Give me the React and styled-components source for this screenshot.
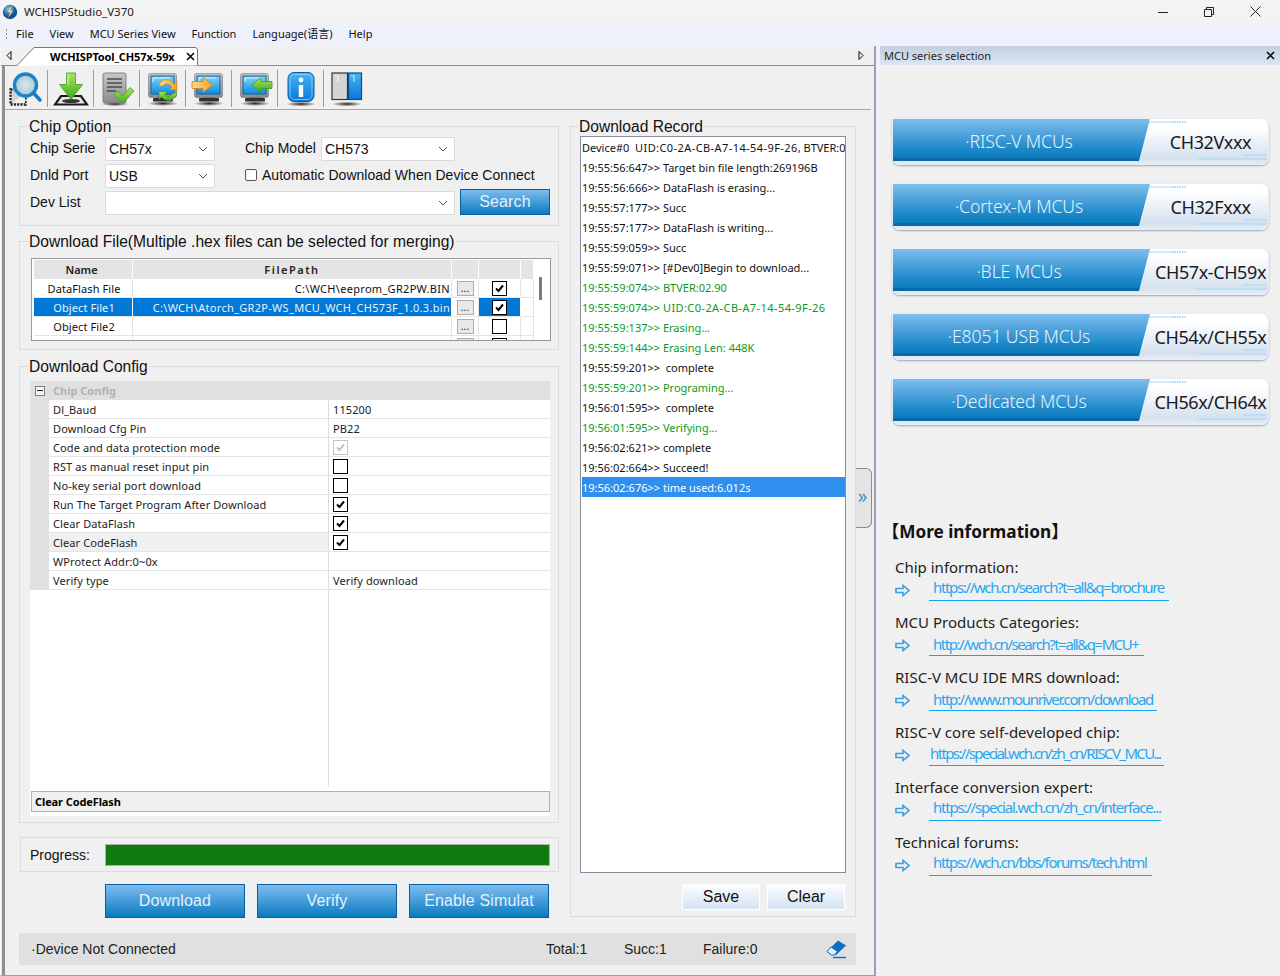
import React from "react";
import styled, { createGlobalStyle } from "styled-components";

const Global = createGlobalStyle`
  html, body { margin: 0; padding: 0; background: #f0f0f0; }
  * { box-sizing: border-box; }
  #root { width: 1280px; height: 976px; overflow: hidden; }
`;

const UI = `"Noto Sans", "Noto Sans CJK SC", sans-serif`;
const ARIAL = `"Liberation Sans", Arial, sans-serif`;

const Shell = styled.div`
  width: 1280px; height: 976px; display: flex; flex-direction: column;
  background: #f0f0f0; font-family: ${UI}; color: #000; overflow: hidden;
`;
const TitleBar = styled.div`
  height: 23px; display: flex; align-items: center; background: #f3f3f3; padding-left: 2px;
  font-size: 12px; color: #222; flex: none;
`;
const TitleText = styled.span`margin-left: 6px; flex: 1; font-size: 11.5px;`;
const WinButtons = styled.div`display: flex; width: 138px; height: 23px; margin-right: 2px;`;
const WinButton = styled.div`width: 46px; display: flex; align-items: center; justify-content: center;`;

const MenuBar = styled.div`
  height: 23px; flex: none; display: flex; align-items: center; gap: 16px; background: #eef0fb;
  font-size: 11px; line-height: 13px; padding: 0 0 2px 5px; color: #111;
`;
const Grip = styled.div`
  width: 3px; height: 11px; margin-right: -8px;
  background: radial-gradient(circle, #8a8a8a 1px, transparent 1.1px) 0 0 / 3px 4px;
`;
const Main = styled.div`flex: 1; display: flex; min-height: 0; background: #f0f2fb;`;

const LeftPane = styled.div`
  width: 876px; flex: none; position: relative; display: flex; flex-direction: column;
  background: #f0f0f0; border-right: 2px solid #a0a0a0; border-left: 1px solid #f8f8f8;
  border-bottom: 1px solid #a0a0a0;
`;
const TabStrip = styled.div`
  height: 20px; flex: none; display: flex; align-items: flex-end; background: #f0f0f0;
  border-bottom: 1px solid #8c8c8c; padding-left: 1px;
`;
const TabArrow = styled.div`width: 14px; height: 19px; display: flex; align-items: center; justify-content: center;`;
const Tab = styled.div`
  position: relative; width: 184px; height: 20px; margin-bottom: -1px; display: flex; align-items: center;
  padding-left: 34px; font-size: 11px; font-weight: 700; letter-spacing: -0.13px;
`;
const TabShape = styled.svg`position: absolute; inset: 0;`;
const TabLabel = styled.span`position: relative; flex: 1;`;
const TabClose = styled.svg`position: relative; margin-right: 5px;`;
const StripFill = styled.div`flex: 1;`;
const StripRight = styled.div`width: 16px; height: 19px; display: flex; align-items: center; margin-right: 0;`;

const Frame = styled.div`
  flex: 1; display: flex; flex-direction: column; min-height: 0;
  border-left: 3px solid #8f8f8f; margin-left: 1px;
`;
const Toolbar = styled.div`
  height: 44px; flex: none; display: flex; align-items: center; padding: 2px 0 0 0;
  border-bottom: 1px solid #a8a8a8; margin-right: 3px;
`;
const ToolCell = styled.div`
  width: ${p => (p.$first ? 43 : 46)}px; height: 37px; display: flex; align-items: center; justify-content: center;
  border-right: ${p => (p.$last ? "none" : "1px solid #9a9a9a")};
`;

const Body = styled.div`
  display: grid; grid-template-columns: 540px 286px; column-gap: 11px; padding: 7px 0 0 14px;
`;
const Column = styled.div`display: flex; flex-direction: column;`;

const Group = styled.fieldset`
  margin: ${p => p.$mt || 0}px 0 0; padding: ${p => p.$pt || 0}px 9px 0 ${p => p.$pl || 10}px; min-width: 0;
  border: 1px solid #dcdcdc; height: ${p => p.$h}px;
`;
const Legend = styled.legend`
  margin-left: -2px; padding: 0 1px; font: 15.6px/20px ${ARIAL}; color: #111; height: 18px;
`;
const OptRow = styled.div`
  display: flex; align-items: center; height: 24px; margin-bottom: 3px; font: 14px ${ARIAL}; color: #111;
`;
const OptLabel = styled.span`width: ${p => p.$w}px; flex: none; margin-left: ${p => p.$ml || 0}px; padding-bottom: 2px;`;
const Combo = styled.div`
  width: ${p => p.$w}px; height: 24px; background: #fff; border: 1px solid #dadada; flex: none; border-radius: 1px;
  display: flex; align-items: center; padding: 0 6px 0 3px; font: 14px ${ARIAL}; color: #111;
`;
const ComboText = styled.span`flex: 1;`;
const CheckLabel = styled.label`
  display: flex; align-items: center; margin-left: 30px; font: 14px ${ARIAL}; color: #111; letter-spacing: 0.03px; padding-bottom: 2px;
`;
const PlainBox = styled.span`
  width: 12px; height: 12px; border: 1px solid #555; border-radius: 2px; background: #fff; margin-right: 5px;
`;
const BlueButton = styled.button`
  width: ${p => p.$w}px; height: ${p => p.$h}px; margin: ${p => p.$m || 0}; padding: 0; flex: none;
  border: 1px solid #0a5f9e; font: 16px ${ARIAL}; letter-spacing: 0.15px; color: #e6f1fa; white-space: nowrap; overflow: hidden;
  background: linear-gradient(#7dbcee, #0a7bc2);
`;

const FileList = styled.div`
  height: 83px; width: 520px; margin-left: 1px; border: 1px solid #9a9a9a; background: #fff; overflow: hidden;
  padding: 1px 0 0 2px; position: relative; font-size: 11px; letter-spacing: 0.1px;
`;
const FileGrid = styled.div`display: grid; grid-template-columns: 99px 319px 27px 42px 13px; width: 500px;`;
const FileHead = styled.div`
  height: 19px; background: #e4e4e4; border-right: 1px solid #fff; display: flex; align-items: center;
  justify-content: center; font-weight: 600; letter-spacing: ${p => p.$sp || 0}px; color: #222;
  padding-right: ${p => p.$pr || 0}px;
`;
const FileCell = styled.div`
  height: 19px; border-right: 1px solid ${p => (p.$sel ? "#fff" : "#e4e4e4")}; border-bottom: 1px solid #e4e4e4;
  display: flex; align-items: center; justify-content: ${p => p.$align || "center"}; overflow: hidden; white-space: nowrap;
  background: ${p => (p.$sel ? "#0078d7" : "#fff")}; color: ${p => (p.$sel ? "#e8f3fc" : "#111")};
  padding: 0 ${p => (p.$align ? 1 : 0)}px 0 ${p => (p.$nudge ? 2 : 0)}px;
  letter-spacing: ${p => (p.$align ? 0.3 : 0.1)}px;
`;
const Dots = styled.span`
  width: 17px; height: 15px; border: 1px solid #adadad; background: #e9e9e9; color: #222; font-size: 10px;
  display: flex; align-items: center; justify-content: center; line-height: 1; padding-bottom: 0;
`;
const Tick = styled.span`
  width: 15px; height: 15px; border: 1px solid ${p => (p.$disabled ? "#c4c4c4" : "#000")}; background: #fff;
  display: flex; align-items: center; justify-content: center; flex: none;
`;
const ScrollThumb = styled.div`
  position: absolute; right: 8px; top: 18px; width: 3px; height: 23px; background: #7a7a7a;
`;

const PropGrid = styled.div`
  width: 520px; height: 406px; background: #fff; display: flex; flex-direction: column; font-size: 11px;
  letter-spacing: 0.1px; color: #222;
`;
const PropHead = styled.div`
  height: 19px; background: #e0e0e0; display: flex; align-items: center; padding-left: 5px; flex: none;
`;
const PropHeadText = styled.span`font-weight: 700; color: #b2b2b2; margin-left: 8px; letter-spacing: 0;`;
const Minus = styled.span`
  width: 10px; height: 10px; border: 1px solid #808080; background: #f4f4f4; display: flex; align-items: center; justify-content: center;
  &::before { content: ""; width: 6px; height: 1px; background: #222; }
`;
const PropRow = styled.div`
  height: 19px; flex: none; display: grid; grid-template-columns: 19px 280px 1fr; 
`;
const Gutter = styled.div`background: #e0e0e0;`;
const PropName = styled.div`
  display: flex; align-items: center; padding-left: 4px; border-right: 1px solid #dcdcdc; border-bottom: 1px solid #e4e4e4;
  background: ${p => (p.$active ? "#f0f0f0" : "#fff")};
`;
const PropValue = styled.div`
  display: flex; align-items: center; padding-left: 4px; border-bottom: 1px solid #e4e4e4;
`;
const PropFill = styled.div`
  flex: 1; margin-left: 19px; width: 280px; border-right: 1px solid #dcdcdc;
`;
const HelpWrap = styled.div`width: 520px; background: #fff; padding: 4px 0 4px 1px; height: 29px;`;
const HelpBox = styled.div`
  height: 21px; width: 519px; border: 1px solid #b0b0b0; background: #f0f0f0; display: flex; align-items: center;
  padding-left: 3px; font-size: 11px; font-weight: 700; letter-spacing: -0.1px;
`;
const ProgressRow = styled.div`
  margin: 14px 0 0 1px; height: 35px; border: 1px solid #dcdcdc; display: flex; align-items: center; padding: 0 8px 0 9px;
  font: 14px ${ARIAL}; color: #111;
`;
const ProgressLabel = styled.span`width: 75px;`;
const ProgressBar = styled.div`flex: 1; height: 22px; border: 1px solid #b0b0b0; background: #107c10;`;
const ActionRow = styled.div`display: flex; gap: 12px; margin-top: 12px; padding-left: 86px;`;

const RecordBox = styled.div`
  width: 266px; height: 737px; border: 1px solid #8c8c9c; background: #fff; padding-left: 1px; overflow: hidden;
  font-size: 11px;
`;
const RecordLine = styled.div`
  height: 20px; display: flex; align-items: center; white-space: pre; overflow: hidden; width: 263px;
  color: ${p => (p.$tone === "green" ? "#0a9a1a" : p.$tone === "sel" ? "#fff" : "#111")};
  background: ${p => (p.$tone === "sel" ? "#2f8fee" : "transparent")};
`;
const Uid = styled.span`letter-spacing: 0.42px;`;
const SaveRow = styled.div`display: flex; justify-content: flex-end; gap: 7px; margin-top: 11px; padding-right: 1px;`;
const SoftButton = styled.button`
  width: 78px; height: 26px; padding: 0; border: 1px solid #fff; font: 16px ${ARIAL}; color: #111;
  background: linear-gradient(#fbfcfe, #d4e3f2);
`;

const StatusBar = styled.div`
  margin: 15px 0 0 14px; width: 837px; height: 32px; background: #e0e0e0; display: flex; align-items: center;
  font: 14px ${ARIAL}; color: #222; padding-left: 12px;
`;
const StatusMain = styled.span`flex: 1;`;
const StatusItem = styled.span`width: ${p => p.$w}px;`;
const Eraser = styled.svg`margin-right: 9px; flex: none;`;

const Handle = styled.div`
  position: absolute; left: 855px; top: 422px; width: 16px; height: 60px; background: #e4e4e4;
  border: 1px solid #8c8c8c; border-left: none; border-radius: 0 6px 6px 0; display: flex; align-items: center;
  justify-content: center; color: #3d8fd6; font-size: 19px; line-height: 1; padding: 0 2px 4px 0;
`;

const RightPane = styled.div`flex: 1; margin-left: 4px; display: flex; flex-direction: column; background: #f0f0f0; min-width: 0;`;
const PaneHead = styled.div`
  height: 19px; flex: none; display: flex; align-items: center; justify-content: space-between; padding: 0 5px 0 4px;
  background: linear-gradient(#c2cfe0, #dbe6f3); font-size: 11px; color: #222;
`;
const CardList = styled.div`display: flex; flex-direction: column; gap: 18px; margin: 53px 11px 0 12px;`;
const Card = styled.div`
  position: relative; height: 47px; display: flex; align-items: flex-start; border-radius: 3px 8px 8px 8px;
  background: linear-gradient(#ffffff 20%, #d5e1ef 85%, #e8eef6 100%); box-shadow: 0 1px 2px #9aa6b4, inset 0 0 0 1px #e9eef5;
`;
const CardBlue = styled.div`
  width: 257px; height: 42px; margin: 1px 0 0 1px; flex: none; display: flex; align-items: center; justify-content: center;
  padding: 2px 5px 0 0; font-size: 17.6px; font-weight: 300; color: #e6f3fc; letter-spacing: -0.1px;
  clip-path: polygon(0 0, 100% 0, 95.7% 100%, 0 100%);
  background: linear-gradient(#7fbdee 0%, #1c88c9 72%, #0c7cbd 92%, #096aa6 93%, #096aa6 100%);
`;
const CardLabel = styled.div`
  flex: 1; height: 47px; display: flex; align-items: center; justify-content: center; font-size: 18px; letter-spacing: -0.4px; color: #1a1a24; white-space: nowrap;
  padding-left: 2px;
`;
const CardTrace = styled.svg`position: absolute; inset: 0; pointer-events: none;`;
const MoreTitle = styled.div`
  margin: 95px 0 13px 2px; height: 24px; line-height: 24px; font-size: 17.2px; font-weight: 700; color: #111;
`;
const InfoSection = styled.div`height: 55px; padding-left: 15px;`;
const InfoLabel = styled.div`font-size: 15px; line-height: 20px; color: #222; height: 20px;`;
const LinkRow = styled.div`display: flex; align-items: flex-start; height: 24px;`;
const ArrowIcon = styled.svg`margin-top: 7px; flex: none;`;
const InfoLink = styled.a`
  display: block; height: 24px; width: ${p => p.$w}px; margin-left: 19px; padding: ${p => p.$dy}px 0 0 ${p => p.$pad}px; line-height: 20px;
  border-bottom: 1px solid #12a5f0; font-size: 15px; letter-spacing: ${p => p.$sp}px; color: #2aa6ef; white-space: nowrap;
`;

const GlossDefs = () => (
  <svg width="0" height="0" style={{ position: "absolute" }}>
    <defs>
      <linearGradient id="scr" x1="0" y1="0" x2="0" y2="1"><stop offset="0" stopColor="#7fd4fb" /><stop offset="1" stopColor="#0b8de0" /></linearGradient>
      <linearGradient id="bez" x1="0" y1="0" x2="0" y2="1"><stop offset="0" stopColor="#c8c8c8" /><stop offset="1" stopColor="#8a8a8a" /></linearGradient>
      <linearGradient id="grn" x1="0" y1="0" x2="0" y2="1"><stop offset="0" stopColor="#a8e65a" /><stop offset="1" stopColor="#3ea81e" /></linearGradient>
      <linearGradient id="org" x1="0" y1="0" x2="1" y2="0"><stop offset="0" stopColor="#ffd98a" /><stop offset="1" stopColor="#f5a623" /></linearGradient>
      <linearGradient id="blu" x1="0" y1="0" x2="0" y2="1"><stop offset="0" stopColor="#45b5f5" /><stop offset="1" stopColor="#0a76d6" /></linearGradient>
      <radialGradient id="shd"><stop offset="0" stopColor="#222" /><stop offset="1" stopColor="#222" stopOpacity="0" /></radialGradient>
      <radialGradient id="lens"><stop offset="0" stopColor="#dde8ec" /><stop offset="1" stopColor="#a9c8d6" /></radialGradient>
      <radialGradient id="globe" cx="0.4" cy="0.3"><stop offset="0" stopColor="#8fc4ea" /><stop offset="1" stopColor="#0f4f96" /></radialGradient>
    </defs>
  </svg>
);

const Ico = ({ children }) => <svg width="36" height="36" viewBox="0 0 36 36">{children}</svg>;
const Monitor = ({ children }) => (
  <Ico>
    <ellipse cx="18" cy="32.5" rx="15" ry="2.5" fill="url(#shd)" />
    <rect x="12" y="25" width="12" height="2.5" fill="#444" />
    <rect x="8" y="27" width="20" height="3.5" rx="1" fill="#2b3138" />
    <rect x="3.5" y="2.5" width="28" height="24" rx="2" fill="url(#bez)" stroke="#777" strokeWidth=".6" />
    <rect x="6" y="5" width="23" height="18" fill="url(#scr)" stroke="#0f63a8" strokeWidth="1" />
    <path d="M8 11V7h17" fill="none" stroke="#d8f2ff" strokeWidth="1" />
    {children}
  </Ico>
);
const IconSearch = () => (
  <Ico>
    <rect x="2.5" y="18.5" width="15" height="15" fill="#d4d4d4" stroke="#222" strokeWidth="2.4" strokeDasharray="2 1.3" />
    <path d="M5 32 L17 22 V32Z" fill="#f0f0f0" />
    <circle cx="17.5" cy="14" r="11" fill="url(#lens)" stroke="#1a86c8" strokeWidth="3.4" />
    <path d="M25.5 22 L32 29" stroke="#1e78c0" strokeWidth="3.6" strokeLinecap="round" />
  </Ico>
);
const IconDownload = () => (
  <Ico>
    <path d="M8 25 H28 L34 33.5 H2Z" fill="#e8e8e8" stroke="#1a1a1a" strokeWidth="2.2" strokeLinejoin="miter" />
    <ellipse cx="18" cy="30" rx="9" ry="2" fill="#333" />
    <path d="M13.5 2 H22.5 V13.5 H29.5 L18 28.5 L6.5 13.5 H13.5Z" fill="url(#grn)" stroke="#3f9a22" strokeWidth=".8" />
    <path d="M15 3.5 V14.5" stroke="#d7f7a8" strokeWidth="1" />
  </Ico>
);
const IconDoc = () => (
  <Ico>
    <ellipse cx="16" cy="33" rx="14" ry="2.2" fill="url(#shd)" />
    <rect x="4" y="2" width="23" height="30" rx="2" fill="url(#bez)" stroke="#6e6e6e" strokeWidth=".8" />
    <path d="M8 8 H23 M8 12 H23 M8 16 H23 M8 20 H17" stroke="#4a4a4a" strokeWidth="1.4" />
    <path d="M15 24 L19 20 L23.5 25 L31 16.5 L35 20 L23.5 33Z" fill="url(#grn)" stroke="#4b9a2c" strokeWidth=".8" />
  </Ico>
);
const IconSync = () => (
  <Monitor>
    <path d="M14 15 C15 8 24 6 29 13 L32 11 L32 19 L24 18.5 L27 16 C24 12 20 12 18 15Z" fill="url(#org)" stroke="#c98316" strokeWidth=".6" />
    <path d="M32 22 C30 30 22 32 16.5 26 L14 28.5 L14 20.5 L22 21 L19.5 23.5 C22 27 26 26 28 22Z" fill="url(#grn)" stroke="#3f9a22" strokeWidth=".6" />
  </Monitor>
);
const IconRight = () => (
  <Monitor>
    <path d="M1 10.5 H12 V6.5 L21.5 14 L12 21.5 V17.5 H1Z" fill="url(#org)" stroke="#c98316" strokeWidth=".8" />
  </Monitor>
);
const IconLeft = () => (
  <Monitor>
    <path d="M35 10.5 H24 V6.5 L14.5 14 L24 21.5 V17.5 H35Z" fill="url(#grn)" stroke="#3f9a22" strokeWidth=".8" />
  </Monitor>
);
const IconInfo = () => (
  <Ico>
    <ellipse cx="18" cy="33" rx="15" ry="2.4" fill="url(#shd)" />
    <rect x="5" y="1.5" width="26" height="29" rx="6" fill="url(#blu)" stroke="#0c5ca8" strokeWidth="1" />
    <rect x="7" y="3.5" width="22" height="25" rx="4.5" fill="none" stroke="#8ed4fa" strokeWidth=".8" />
    <circle cx="18" cy="9" r="2.4" fill="#fff" />
    <path d="M15.8 14 H20.2 V26 H15.8Z" fill="#fff" />
  </Ico>
);
const IconPanels = () => (
  <Ico>
    <ellipse cx="18" cy="33" rx="15" ry="2.4" fill="url(#shd)" />
    <rect x="3" y="2" width="15.5" height="26.5" fill="#d4d4d4" stroke="#333" strokeWidth="1.2" />
    <path d="M6 5 H9 V11" fill="none" stroke="#f4f4f4" strokeWidth="1.2" />
    <rect x="19.5" y="2" width="13" height="26.5" fill="url(#blu)" stroke="#0f4c8c" strokeWidth="1.2" />
    <path d="M22 5 H25 V11" fill="none" stroke="#bde6ff" strokeWidth="1.2" />
  </Ico>
);
const Check = ({ color = "#000" }) => (
  <svg width="11" height="11" viewBox="0 0 11 11"><path d="M2 5.5 L4.5 8 L9 2.5" fill="none" stroke={color} strokeWidth="2" /></svg>
);
const Chevron = () => (
  <svg width="10" height="6" viewBox="0 0 10 6"><path d="M1 1 L5 5 L9 1" fill="none" stroke="#555" strokeWidth="1" /></svg>
);
const Cross = ({ s = 9 }) => (
  <svg width={s} height={s} viewBox="0 0 9 9"><path d="M1 1 L8 8 M8 1 L1 8" stroke="#000" strokeWidth="1.5" /></svg>
);

const tools = [IconSearch, IconDownload, IconDoc, IconSync, IconRight, IconLeft, IconInfo, IconPanels];
const menus = ["File", "View", "MCU Series View", "Function", "Language(语言)", "Help"];
const files = [
  { name: "DataFlash File", path: "C:\\WCH\\eeprom_GR2PW.BIN", on: true },
  { name: "Object File1", path: "C:\\WCH\\Atorch_GR2P-WS_MCU_WCH_CH573F_1.0.3.bin", on: true, sel: true },
  { name: "Object File2", path: "", on: false },
];
const props = [
  { n: "Dl_Baud", v: "115200" },
  { n: "Download Cfg Pin", v: "PB22" },
  { n: "Code and data protection mode", c: "disabled" },
  { n: "RST as manual reset input pin", c: "off" },
  { n: "No-key serial port download", c: "off" },
  { n: "Run The Target Program After Download", c: "on" },
  { n: "Clear DataFlash", c: "on" },
  { n: "Clear CodeFlash", c: "on", active: true },
  { n: "WProtect Addr:0~0x", v: "" },
  { n: "Verify type", v: "Verify download" },
];
const records = [
  ["Device#0  UID:C0-2A-CB-A7-14-54-9F-26, BTVER:02.90"],
  ["19:55:56:647>> Target bin file length:269196B"],
  ["19:55:56:666>> DataFlash is erasing..."],
  ["19:55:57:177>> Succ"],
  ["19:55:57:177>> DataFlash is writing..."],
  ["19:55:59:059>> Succ"],
  ["19:55:59:071>> [#Dev0]Begin to download..."],
  ["19:55:59:074>> BTVER:02.90", "green"],
  ["19:55:59:074>> UID:C0-2A-CB-A7-14-54-9F-26", "green"],
  ["19:55:59:137>> Erasing...", "green"],
  ["19:55:59:144>> Erasing Len: 448K", "green"],
  ["19:55:59:201>>  complete"],
  ["19:55:59:201>> Programing...", "green"],
  ["19:56:01:595>>  complete"],
  ["19:56:01:595>> Verifying...", "green"],
  ["19:56:02:621>> complete"],
  ["19:56:02:664>> Succeed!"],
  ["19:56:02:676>> time used:6.012s", "sel"],
];
const cards = [
  ["·RISC-V MCUs", "CH32Vxxx"],
  ["·Cortex-M MCUs", "CH32Fxxx"],
  ["·BLE MCUs", "CH57x-CH59x"],
  ["·E8051 USB MCUs", "CH54x/CH55x"],
  ["·Dedicated MCUs", "CH56x/CH64x"],
];
const infos = [
  ["Chip information:", "https://wch.cn/search?t=all&q=brochure", 240, 4, 0, -1.35],
  ["MCU Products Categories:", "http://wch.cn/search?t=all&q=MCU+", 215, 4, 2, -1.45],
  ["RISC-V MCU IDE MRS download:", "http://www.mounriver.com/download", 228, 4, 2, -1.35],
  ["RISC-V core self-developed chip:", "https://special.wch.cn/zh_cn/RISCV_MCU...", 235, 1, 1, -1.62],
  ["Interface conversion expert:", "https://special.wch.cn/zh_cn/interface...", 232, 4, 0, -1.22],
  ["Technical forums:", "https://wch.cn/bbs/forums/tech.html", 223, 4, 0, -1.35],
];

const Toggle = ({ state }) =>
  state === "disabled" ? <Tick $disabled><Check color="#c4c4c4" /></Tick>
    : state === "on" ? <Tick><Check /></Tick> : <Tick />;

const RecordText = ({ text }) =>
  text.split(/(UID:[^,]*)/).map((part, i) => (i % 2 ? <Uid key={i}>{part}</Uid> : part));

export default function App() {
  return (
    <Shell>
      <Global />
      <GlossDefs />
      <TitleBar>
        <svg width="16" height="16" viewBox="0 0 16 16">
          <circle cx="8" cy="8" r="7.2" fill="url(#globe)" />
          <path d="M10 1.5 L5.5 8 H8 L6 14 L11 6.8 H8.5Z" fill="#e6e26a" />
        </svg>
        <TitleText>WCHISPStudio_V370</TitleText>
        <WinButtons>
          <WinButton><svg width="10" height="10" viewBox="0 0 10 10"><path d="M0 5.5H10" stroke="#222" /></svg></WinButton>
          <WinButton><svg width="10" height="10" viewBox="0 0 10 10"><path d="M.5 2.5H7.5V9.5H.5Z M2.5 2.5V.5H9.5V7.5H7.5" fill="none" stroke="#222" /></svg></WinButton>
          <WinButton><svg width="11" height="11" viewBox="0 0 11 11"><path d="M.5 .5L10.5 10.5M10.5 .5L.5 10.5" stroke="#222" /></svg></WinButton>
        </WinButtons>
      </TitleBar>
      <MenuBar>
        <Grip />
        {menus.map(m => <span key={m}>{m}</span>)}
      </MenuBar>
      <Main>
        <LeftPane>
          <TabStrip>
            <TabArrow><svg width="6" height="9" viewBox="0 0 6 9"><path d="M5 .5 L1 4.5 L5 8.5Z" fill="#fff" stroke="#000" /></svg></TabArrow>
            <Tab>
              <TabShape width="184" height="20" viewBox="0 0 184 20"><path d="M.5 20 L18 1.5 H179 Q181.5 1.5 181.5 4 V19.5" fill="#fff" stroke="#777" /></TabShape>
              <TabLabel>WCHISPTool_CH57x-59x</TabLabel>
              <TabClose width="9" height="9" viewBox="0 0 9 9"><path d="M1 1 L8 8 M8 1 L1 8" stroke="#000" strokeWidth="1.5" /></TabClose>
            </Tab>
            <StripFill />
            <StripRight><svg width="6" height="9" viewBox="0 0 6 9"><path d="M1 .5 L5 4.5 L1 8.5Z" fill="#fff" stroke="#000" /></svg></StripRight>
          </TabStrip>
          <Frame>
            <Toolbar>
              {tools.map((T, i) => <ToolCell key={i} $first={i === 0} $last={i === tools.length - 1}><T /></ToolCell>)}
            </Toolbar>
            <Body>
              <Column>
                <Group $h={109} $pt={2}>
                  <Legend>Chip Option</Legend>
                  <OptRow>
                    <OptLabel $w={75}>Chip Serie</OptLabel>
                    <Combo $w={110}><ComboText>CH57x</ComboText><Chevron /></Combo>
                    <OptLabel $w={76} $ml={30}>Chip Model</OptLabel>
                    <Combo $w={134}><ComboText>CH573</ComboText><Chevron /></Combo>
                  </OptRow>
                  <OptRow>
                    <OptLabel $w={75}>Dnld Port</OptLabel>
                    <Combo $w={110}><ComboText>USB</ComboText><Chevron /></Combo>
                    <CheckLabel><PlainBox />Automatic Download When Device Connect</CheckLabel>
                  </OptRow>
                  <OptRow>
                    <OptLabel $w={75}>Dev List</OptLabel>
                    <Combo $w={350}><ComboText /><Chevron /></Combo>
                    <BlueButton $w={90} $h={26} $m="-2px 0 0 5px">Search</BlueButton>
                  </OptRow>
                </Group>
                <Group $h={118} $mt={6} $pt={8}>
                  <Legend>Download File(Multiple .hex files can be selected for merging)</Legend>
                  <FileList>
                    <FileGrid>
                      <FileHead $pr={3}>Name</FileHead>
                      <FileHead $sp={1.5}>FilePath</FileHead>
                      <FileHead />
                      <FileHead />
                      <FileHead />
                      {files.map(f => (
                        <React.Fragment key={f.name}>
                          <FileCell $sel={f.sel} $nudge>{f.name}</FileCell>
                          <FileCell $sel={f.sel} $align="flex-end">{f.path}</FileCell>
                          <FileCell><Dots>...</Dots></FileCell>
                          <FileCell $sel={f.sel}><Toggle state={f.on ? "on" : "off"} /></FileCell>
                          <FileCell $sel={false} />
                        </React.Fragment>
                      ))}
                      <FileCell />
                      <FileCell />
                      <FileCell><Dots /></FileCell>
                      <FileCell><Tick /></FileCell>
                      <FileCell />
                    </FileGrid>
                    <ScrollThumb />
                  </FileList>
                </Group>
                <Group $h={466} $mt={7} $pt={6}>
                  <Legend>Download Config</Legend>
                  <PropGrid>
                    <PropHead><Minus /><PropHeadText>Chip Config</PropHeadText></PropHead>
                    {props.map(p => (
                      <PropRow key={p.n}>
                        <Gutter />
                        <PropName $active={p.active}>{p.n}</PropName>
                        <PropValue>{p.c ? <Toggle state={p.c} /> : p.v}</PropValue>
                      </PropRow>
                    ))}
                    <PropFill />
                  </PropGrid>
                  <HelpWrap><HelpBox>Clear CodeFlash</HelpBox></HelpWrap>
                </Group>
                <ProgressRow>
                  <ProgressLabel>Progress:</ProgressLabel>
                  <ProgressBar />
                </ProgressRow>
                <ActionRow>
                  <BlueButton $w={140} $h={34}>Download</BlueButton>
                  <BlueButton $w={140} $h={34}>Verify</BlueButton>
                  <BlueButton $w={140} $h={34}>Enable Simulat</BlueButton>
                </ActionRow>
              </Column>
              <Column>
                <Group $h={800} $pt={1} $pl={9}>
                  <Legend>Download Record</Legend>
                  <RecordBox>
                    {records.map(([t, tone], i) => <RecordLine key={i} $tone={tone}><span><RecordText text={t} /></span></RecordLine>)}
                  </RecordBox>
                  <SaveRow>
                    <SoftButton>Save</SoftButton>
                    <SoftButton>Clear</SoftButton>
                  </SaveRow>
                </Group>
              </Column>
            </Body>
            <StatusBar>
              <StatusMain>·Device Not Connected</StatusMain>
              <StatusItem $w={78}>Total:1</StatusItem>
              <StatusItem $w={79}>Succ:1</StatusItem>
              <StatusItem $w={122}>Failure:0</StatusItem>
              <Eraser width="22" height="20" viewBox="0 0 22 20">
                <path d="M13 1.5 L21 6.5 L11 16 H6.5 L2 12.5Z" fill="#0a6fc4" />
                <path d="M2 12.5 L6 8 L12.5 12.5 L9.5 16 H6.5Z" fill="#e8f0f8" stroke="#0a6fc4" />
                <path d="M8 18.5 H21" stroke="#0a6fc4" strokeWidth="1.4" />
              </Eraser>
            </StatusBar>
          </Frame>
          <Handle>»</Handle>
        </LeftPane>
        <RightPane>
          <PaneHead>MCU series selection<Cross /></PaneHead>
          <CardList>
            {cards.map(([a, b]) => (
              <Card key={a}>
                <CardBlue>{a}</CardBlue>
                <CardLabel>{b}</CardLabel>
                <CardTrace width="377" height="47" viewBox="0 0 377 47">
                  <path d="M257 4 H280" stroke="#a9d6f5" />
                  <path d="M280 4 H295" stroke="#a9d6f5" strokeWidth="2" strokeDasharray="1.5 1" />
                  <path d="M306 41 H375" stroke="#a9d6f5" />
                  <path d="M351 37 H375" stroke="#a9d6f5" />
                </CardTrace>
              </Card>
            ))}
          </CardList>
          <MoreTitle>【More information】</MoreTitle>
          {infos.map(([l, h, w, pad, dy, sp]) => (
            <InfoSection key={l}>
              <InfoLabel>{l}</InfoLabel>
              <LinkRow>
                <ArrowIcon width="15" height="13" viewBox="0 0 15 13"><path d="M1 4.5 H8 V1.5 L14 6.5 L8 11.5 V8.5 H1Z" fill="none" stroke="#3a9ede" strokeWidth="1.6" /></ArrowIcon>
                <InfoLink $w={w} $pad={pad} $dy={dy} $sp={sp}>{h}</InfoLink>
              </LinkRow>
            </InfoSection>
          ))}
        </RightPane>
      </Main>
    </Shell>
  );
}
